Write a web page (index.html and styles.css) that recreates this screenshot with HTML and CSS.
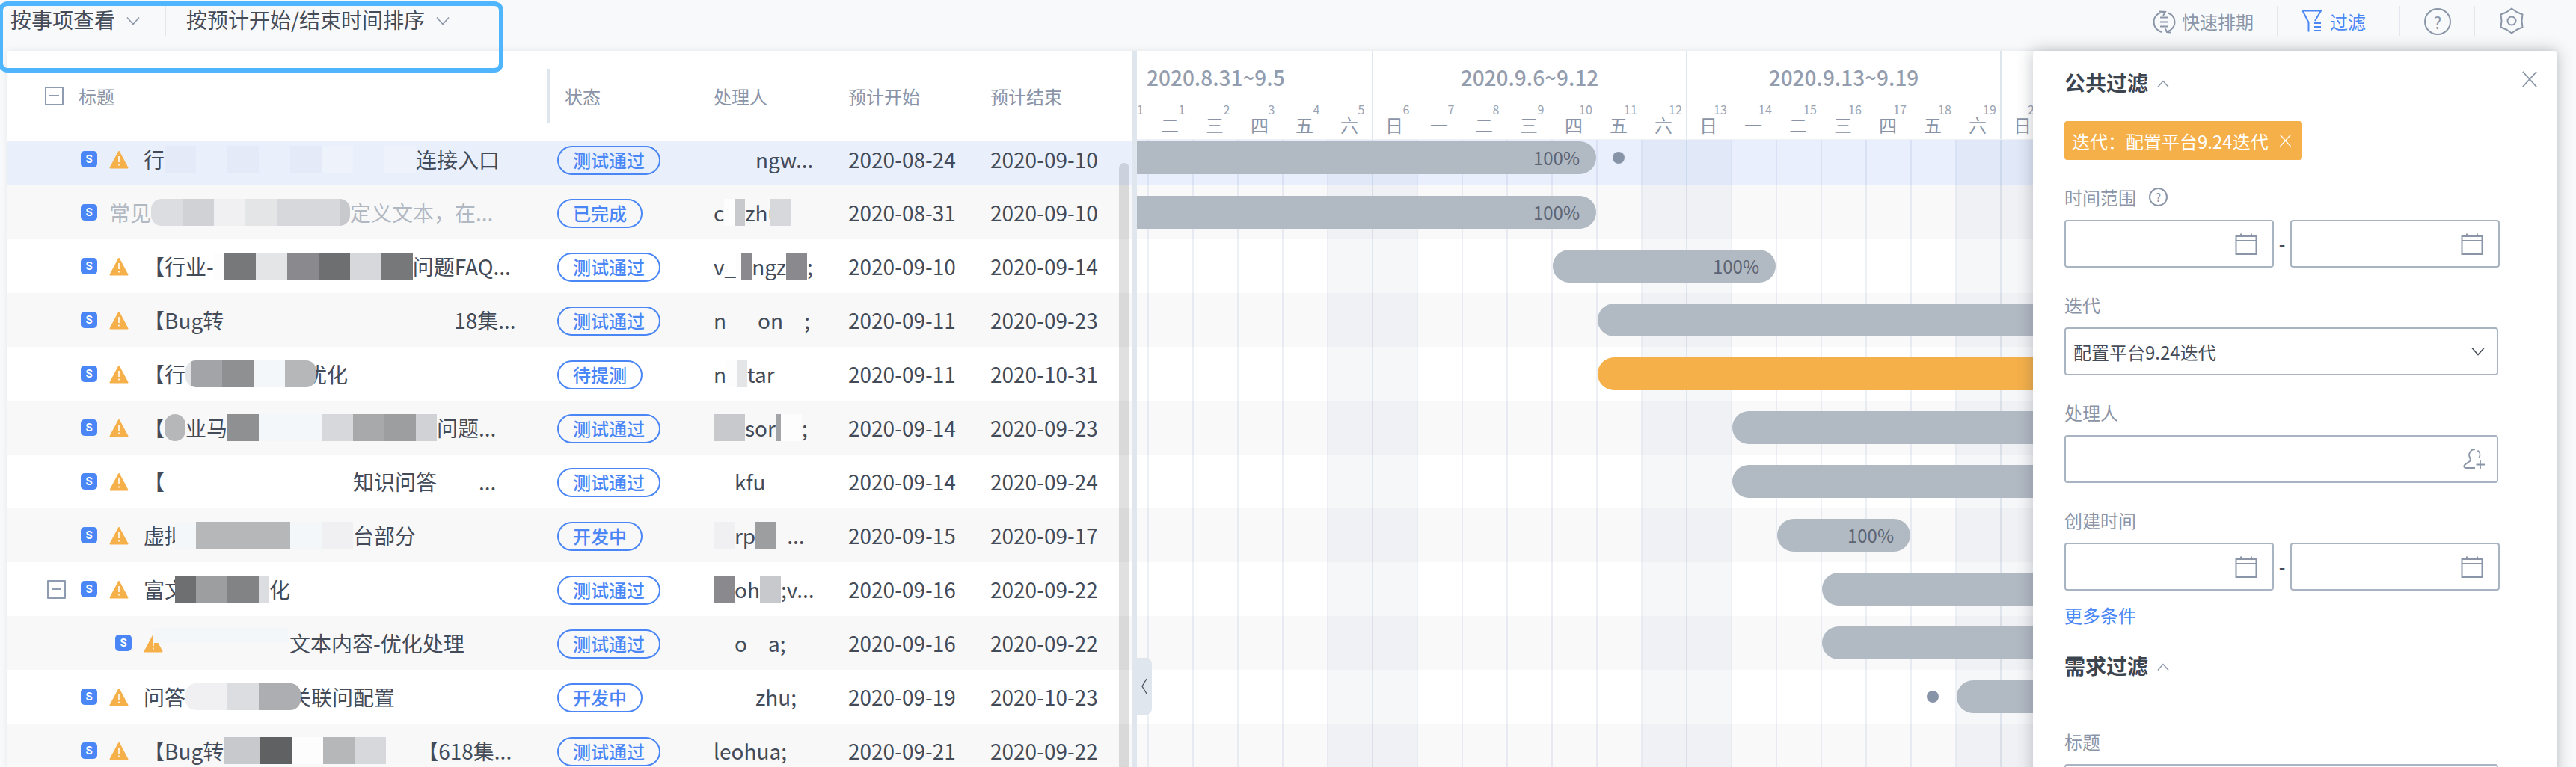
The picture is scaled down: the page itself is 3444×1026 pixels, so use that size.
FILE: index.html
```html
<!DOCTYPE html>
<html lang="zh">
<head>
<meta charset="utf-8">
<title>排期</title>
<link rel="stylesheet" href="styles.css">
</head>
<body>

<svg class="defs" width="0" height="0">
	<symbol id="warn" viewBox="0 0 26 25"><path d="M13 2 24.5 23.5H1.5Z" fill="#f5b04a" stroke="#f5b04a" stroke-width="2" stroke-linejoin="round"/><path d="M13 8v8M13 18.5v2" stroke="#fff" stroke-width="1.6" fill="none"/></symbol>
	<symbol id="down" viewBox="0 0 18 12"><path d="M1 1.5 9 10.5 17 1.5" fill="none" stroke="currentColor" stroke-width="1.5"/></symbol>
	<symbol id="up" viewBox="0 0 18 12"><path d="M1 10.5 9 1.5 17 10.5" fill="none" stroke="currentColor" stroke-width="1.5"/></symbol>
	<symbol id="cross" viewBox="0 0 24 24"><path d="M2 1 22 23M22 1 2 23" fill="none" stroke="currentColor" stroke-width="1.8"/></symbol>
	<symbol id="cal" viewBox="0 0 30 30"><path d="M1.5 5h27v24h-27zM1.5 11h27M8 1.5V5M22 1.5V5" fill="none" stroke="currentColor" stroke-width="2"/></symbol>
	<symbol id="quick" viewBox="0 0 33 31"><path d="M18 2C9 1.500 2.500 8 2.500 15.500c0 6.500 4.500 12 11 13.500M10 1.500l8 .5-3 5M22 3.500c5.500 2.500 8.500 7 8.500 12 0 6.500-4.500 11.500-10.500 13M18 24.500l2 4.500 5 .5M11 9.500h11M11 15.500h11M11 21.500h11" fill="none" stroke="currentColor" stroke-width="2"/></symbol>
	<symbol id="filter" viewBox="0 0 28 30"><path d="M1.500 1.500H26L18 15M1.500 1.500 9.500 17v12.500M17 18h9M17 23h9M17 28h9" fill="none" stroke="currentColor" stroke-width="2"/></symbol>
	<symbol id="gear" viewBox="0 0 34 36"><path d="M17 1.500 23.700 6.300 31.500 9.500 30.500 18 31.500 26.500 23.700 29.700 17 34.500 10.300 29.700 2.500 26.500 3.500 18 2.500 9.500 10.300 6.300Z" fill="none" stroke="currentColor" stroke-width="2" stroke-linejoin="round"/><circle cx="17" cy="18" r="5.500" fill="none" stroke="currentColor" stroke-width="2"/></symbol>
	<symbol id="adduser" viewBox="0 0 30 30"><path d="M17 2a7.500 7.500 0 0 0-7 11c1 2 1 3.500 0 5l-7 5c-1.500 2-.5 4 1.500 4H17M20.500 3.500a7.500 7.500 0 0 1 2 9.500M24 17v11M18.500 22.500H30" fill="none" stroke="currentColor" stroke-width="1.800"/></symbol>
</svg>

<div class="page">

	<header class="toolbar">
		<div class="tb-group">
			<span class="tb-select">按事项查看</span>
			<svg class="tb-chev"><use href="#down"/></svg>
			<span class="tb-sep tb-sep-left"></span>
			<span class="tb-select">按预计开始/结束时间排序</span>
			<svg class="tb-chev"><use href="#down"/></svg>
		</div>
		<div class="tb-group tb-actions">
			<svg class="ic-quick"><use href="#quick"/></svg>
			<span class="tb-link">快速排期</span>
			<span class="tb-sep"></span>
			<svg class="ic-filter"><use href="#filter"/></svg>
			<span class="tb-link active">过滤</span>
			<span class="tb-sep sep-wide"></span>
			<span class="help-big">?</span>
			<span class="tb-sep"></span>
			<svg class="ic-gear"><use href="#gear"/></svg>
		</div>
	</header>

	<div class="main">
		<section class="table">
			<div class="thead">
				<div class="th-title"><span class="box"></span><span>标题</span><span class="th-rule"></span></div>
				<div class="th th-status">状态</div>
				<div class="th">处理人</div>
				<div class="th">预计开始</div>
				<div class="th">预计结束</div>
			</div>

			<div class="row first selected">
				<div class="title"><span class="s">S</span><svg class="warn"><use href="#warn"/></svg>行<span class="smear"><i class="b1"></i><i class="b2"></i><i class="b1"></i><i class="b2"></i><i class="b1"></i><i class="b3"></i><i class="b2"></i><i class="b3"></i></span>连接入口</div>
				<div><span class="pill">测试通过</span></div>
				<div class="who"><span class="smear"><i class="w56 b2"></i></span>ngw...</div>
				<div>2020-08-24</div>
				<div>2020-09-10</div>
			</div>
			<div class="row alt done">
				<div class="title"><span class="s">S</span>常见<span class="smear round"><i class="gdc"></i><i class="gd0"></i><i class="gf0"></i><i class="ge4"></i><i class="gd6"></i><i class="gd6"></i><i class="w14 gc8"></i></span>定义文本，在...</div>
				<div><span class="pill">已完成</span></div>
				<div class="who">c<span class="smear"><i class="w14 wh"></i><i class="w14 gc8"></i></span>zhu<span class="smear back"><i class="w28 gd6"></i></span></div>
				<div>2020-08-31</div>
				<div>2020-09-10</div>
			</div>
			<div class="row">
				<div class="title"><span class="s">S</span><svg class="warn"><use href="#warn"/></svg>【行业-<span class="smear"><i class="w14 wh"></i><i class="g77"></i><i class="ge4"></i><i class="g8a"></i><i class="g6e"></i><i class="gd6"></i><i class="g77"></i></span>问题FAQ...</div>
				<div><span class="pill">测试通过</span></div>
				<div class="who">v_<span class="smear"><i class="w7 wh"></i><i class="w14 g8a"></i></span>ngz<span class="smear"><i class="w28 g8a"></i></span>;</div>
				<div>2020-09-10</div>
				<div>2020-09-14</div>
			</div>
			<div class="row alt">
				<div class="title"><span class="s">S</span><svg class="warn"><use href="#warn"/></svg>【Bug转<span class="smear"><i></i><i></i><i></i><i></i><i></i><i></i><i></i><i class="w14"></i></span>18集...</div>
				<div><span class="pill">测试通过</span></div>
				<div class="who">n<span class="smear"><i></i></span>on<span class="smear"><i class="w28"></i></span>;</div>
				<div>2020-09-11</div>
				<div>2020-09-23</div>
			</div>
			<div class="row">
				<div class="title"><span class="s">S</span><svg class="warn"><use href="#warn"/></svg>【行<span class="smear round over"><i class="w7 ge4"></i><i class="ga3"></i><i class="g8f"></i><i class="gf4"></i><i class="gb5"></i></span>优化</div>
				<div><span class="pill">待提测</span></div>
				<div class="who">n<span class="smear"><i class="w14 wh"></i><i class="w14 ge4"></i></span>tar</div>
				<div>2020-09-11</div>
				<div>2020-10-31</div>
			</div>
			<div class="row alt">
				<div class="title"><span class="s">S</span><svg class="warn"><use href="#warn"/></svg>【<span class="smear round"><i class="w28 gb5"></i></span>业马<span class="smear"><i class="g8f"></i><i class="gf4"></i><i class="gf4"></i><i class="gd6"></i><i class="ga8"></i><i class="g9d"></i><i class="w28 gd0"></i></span>问题...</div>
				<div><span class="pill">测试通过</span></div>
				<div class="who"><span class="smear"><i class="gc8"></i></span>sor<span class="smear"><i class="w7 ga3"></i><i class="w28 wh"></i></span>;</div>
				<div>2020-09-14</div>
				<div>2020-09-23</div>
			</div>
			<div class="row">
				<div class="title"><span class="s">S</span><svg class="warn"><use href="#warn"/></svg>【<span class="smear"><i></i><i></i><i></i><i></i><i></i><i></i></span>知识问答<span class="smear"><i class="w56"></i></span>...</div>
				<div><span class="pill">测试通过</span></div>
				<div class="who"><span class="smear"><i class="w28"></i></span>kfu</div>
				<div>2020-09-14</div>
				<div>2020-09-24</div>
			</div>
			<div class="row alt">
				<div class="title"><span class="s">S</span><svg class="warn"><use href="#warn"/></svg>虚拟<span class="smear back"><i class="w28 gf4"></i><i class="gb5"></i><i class="gb5"></i><i class="gb5"></i><i class="gf4"></i><i class="gf0"></i></span>台部分</div>
				<div><span class="pill">开发中</span></div>
				<div class="who"><span class="smear"><i class="w28 gf0"></i></span>rp<span class="smear"><i class="w28 g9d"></i><i class="w14"></i></span>...</div>
				<div>2020-09-15</div>
				<div>2020-09-17</div>
			</div>
			<div class="row">
				<div class="title has-box"><span class="box"></span><span class="s">S</span><svg class="warn"><use href="#warn"/></svg>富文<span class="smear back"><i class="w28 g6e"></i><i class="g9d"></i><i class="g82"></i><i class="w14 gdc"></i></span>化</div>
				<div><span class="pill">测试通过</span></div>
				<div class="who"><span class="smear"><i class="w28 g8a"></i></span>oh<span class="smear"><i class="w28 gc8"></i></span>;v...</div>
				<div>2020-09-16</div>
				<div>2020-09-22</div>
			</div>
			<div class="row alt">
				<div class="title child"><span class="s">S</span><svg class="warn"><use href="#warn"/></svg><span class="smear high"><i class="gf4"></i><i class="gf4"></i><i class="gf4"></i><i class="gf4"></i><i class="w14 gf4"></i></span>文本内容-优化处理</div>
				<div><span class="pill">测试通过</span></div>
				<div class="who"><span class="smear"><i class="w28"></i></span>o<span class="smear"><i class="w28"></i></span>a;</div>
				<div>2020-09-16</div>
				<div>2020-09-22</div>
			</div>
			<div class="row">
				<div class="title"><span class="s">S</span><svg class="warn"><use href="#warn"/></svg>问答<span class="smear round over"><i class="w56 gf0"></i><i class="gdc"></i><i class="w56 gad"></i></span>关联问配置</div>
				<div><span class="pill">开发中</span></div>
				<div class="who"><span class="smear"><i class="w56"></i></span>zhu;</div>
				<div>2020-09-19</div>
				<div>2020-10-23</div>
			</div>
			<div class="row alt">
				<div class="title"><span class="s">S</span><svg class="warn"><use href="#warn"/></svg>【Bug转<span class="smear"><i class="w7 gc8"></i><i class="gc8"></i><i class="g60"></i><i class="wh"></i><i class="gb5"></i><i class="gd6"></i><i></i></span>【618集...</div>
				<div><span class="pill">测试通过</span></div>
				<div class="who">leohua;</div>
				<div>2020-09-21</div>
				<div>2020-09-22</div>
			</div>
			<div class="scroll-thumb"></div>
		</section>

		<div class="split"></div>

		<section class="gantt">
			<div class="weeks">
				<div class="week week-first">2020.8.31~9.5</div>
				<div class="week">2020.9.6~9.12</div>
				<div class="week">2020.9.13~9.19</div>
				<div class="week"></div>
			</div>
			<div class="days">
				<div class="day day-clip"><b>31</b></div>
				<div class="day"><b>1</b>二</div><div class="day"><b>2</b>三</div><div class="day"><b>3</b>四</div><div class="day"><b>4</b>五</div><div class="day"><b>5</b>六</div>
				<div class="day"><b>6</b>日</div><div class="day"><b>7</b>一</div><div class="day"><b>8</b>二</div><div class="day"><b>9</b>三</div><div class="day"><b>10</b>四</div><div class="day"><b>11</b>五</div><div class="day"><b>12</b>六</div>
				<div class="day"><b>13</b>日</div><div class="day"><b>14</b>一</div><div class="day"><b>15</b>二</div><div class="day"><b>16</b>三</div><div class="day"><b>17</b>四</div><div class="day"><b>18</b>五</div><div class="day"><b>19</b>六</div>
				<div class="day"><b>20</b>日</div>
			</div>
			<div class="chart">
				<div class="g-row first selected"><div class="bar b-aug-10">100%</div><span class="dot d-11"></span></div>
				<div class="g-row alt"><div class="bar b-aug-10">100%</div></div>
				<div class="g-row"><div class="bar b-10-14">100%</div></div>
				<div class="g-row alt"><div class="bar b-11"></div></div>
				<div class="g-row"><div class="bar b-11 orange"></div></div>
				<div class="g-row alt"><div class="bar b-14"></div></div>
				<div class="g-row"><div class="bar b-14"></div></div>
				<div class="g-row alt"><div class="bar b-15-17">100%</div></div>
				<div class="g-row"><div class="bar b-16"></div></div>
				<div class="g-row alt"><div class="bar b-16"></div></div>
				<div class="g-row"><span class="dot d-18"></span><div class="bar b-19"></div></div>
				<div class="g-row alt"></div>
			</div>
			<div class="collapse-tab"><svg viewBox="0 0 10 22" class="ic-left"><path d="M8 1 2 11 8 21" fill="none" stroke="#4a5260" stroke-width="1.300"/></svg></div>
		</section>
	</div>

	<aside class="panel">
		<div class="panel-head">
			<span class="panel-title">公共过滤</span>
			<svg class="ic-up"><use href="#up"/></svg>
			<svg class="ic-close"><use href="#cross"/></svg>
		</div>
		<div class="tag">迭代：配置平台9.24迭代<svg class="ic-tagx"><use href="#cross"/></svg></div>

		<div class="label first-label">时间范围<span class="help-small">?</span></div>
		<div class="date-range">
			<div class="input"><svg class="ic-cal"><use href="#cal"/></svg></div>
			<span class="dash">-</span>
			<div class="input"><svg class="ic-cal"><use href="#cal"/></svg></div>
		</div>

		<div class="label">迭代</div>
		<div class="input wide">配置平台9.24迭代<svg class="ic-select"><use href="#down"/></svg></div>

		<div class="label">处理人</div>
		<div class="input wide"><svg class="ic-user"><use href="#adduser"/></svg></div>

		<div class="label">创建时间</div>
		<div class="date-range">
			<div class="input"><svg class="ic-cal"><use href="#cal"/></svg></div>
			<span class="dash">-</span>
			<div class="input"><svg class="ic-cal"><use href="#cal"/></svg></div>
		</div>

		<div class="more">更多条件</div>

		<div class="panel-head second">
			<span class="panel-title">需求过滤</span>
			<svg class="ic-up"><use href="#up"/></svg>
		</div>

		<div class="label title-label">标题</div>
		<div class="input wide"></div>
	</aside>

	<div class="highlight"></div>
</div>

</body>
</html>
```

FILE: styles.css
```css
* {
	box-sizing: border-box;
}
body {
	margin: 0;
	background: #f8f9fa;
	font-family: "Noto Sans CJK SC", "Liberation Sans", sans-serif;
	color: #444b58;
}
.defs {
	position: absolute;
}
.page {
	position: relative;
	width: 3444px;
	height: 1026px;
	overflow: hidden;
}

/* toolbar */
.toolbar {
	display: flex;
	justify-content: space-between;
	height: 68px;
	padding: 8px 69px 0 14px;
}
.tb-group {
	display: flex;
	align-items: flex-start;
}
.tb-select {
	font-size: 28px;
	line-height: 36px;
}
.tb-chev {
	width: 18px;
	height: 12px;
	margin: 14px 0 0 15px;
	color: #8a96a8;
}
.tb-sep {
	width: 2px;
	height: 40px;
	margin: 0 31px;
	background: #e3e7ed;
}
.tb-sep-left {
	margin: 0 27px 0 33px;
}
.sep-wide {
	margin: 0 32px 0 44px;
}
.tb-actions {
	color: #8a96a8;
}
.tb-link {
	font-size: 24px;
	line-height: 42px;
}
.tb-link.active {
	color: #4a86f5;
}
.ic-quick {
	width: 33px;
	height: 31px;
	margin: 6px 7px 0 0;
}
.ic-filter {
	width: 28px;
	height: 30px;
	margin: 5px 10px 0 0;
	color: #4a86f5;
}
.help-big {
	width: 36px;
	height: 36px;
	margin: 3px 0 0 0;
	border: 2px solid #8a96a8;
	border-radius: 50%;
	font-size: 22px;
	line-height: 32px;
	text-align: center;
}
.help-big + .tb-sep {
	margin: 0 32px 0 30px;
}
.ic-gear {
	width: 34px;
	height: 36px;
	margin-top: 2px;
}

/* layout */
.main {
	display: flex;
	height: 958px;
	margin: 0 26px 0 10px;
	background: #fff;
	box-shadow: 0 0 8px rgba(60, 70, 90, .12);
}
.table {
	position: relative;
	flex: none;
	width: 1504px;
	font-size: 28px;
}
.split {
	flex: none;
	width: 6px;
	background: #dfe6ee;
}
.gantt {
	position: relative;
	flex: 1;
	overflow: hidden;
	min-width: 0;
}

/* table */
.thead,
.row {
	display: grid;
	grid-template-columns: 735px 209px 180px 190px 1fr;
	align-items: center;
}
.thead {
	height: 120px;
	font-size: 24px;
	color: #8a94a6;
}
.th-status {
	padding-left: 10px;
}
.th-title {
	display: flex;
	align-items: center;
	padding: 0 10px 0 50px;
}
.th-rule {
	width: 4px;
	height: 72px;
	margin-left: auto;
	background: #dfe5ec;
}
.box {
	position: relative;
	flex: none;
	width: 25px;
	height: 25px;
	margin-right: 20px;
	border: 2px solid #8f9bb0;
	border-radius: 1px;
}
.box::after {
	content: "";
	position: absolute;
	left: 4px;
	right: 4px;
	top: 9.500px;
	height: 2px;
	background: #8f9bb0;
}
.row {
	height: 72px;
	line-height: 40px;
	white-space: nowrap;
}
.row.first {
	height: 60px;
	padding-bottom: 10px;
}
.alt {
	background: rgba(60, 60, 80, .035);
}
.selected {
	background: #e9f0fc;
}
.g-row.selected {
	background: rgba(70, 125, 240, .12);
}
.g-row.alt {
	background: rgba(60, 60, 80, .03);
}
.title {
	display: flex;
	align-items: center;
	padding-left: 98px;
	overflow: hidden;
}
.title.has-box {
	padding-left: 53px;
}
.title.child {
	padding-left: 144px;
}
.done .title {
	color: #b2b8c2;
}
.s {
	flex: none;
	width: 22px;
	height: 22px;
	margin-right: 16px;
	border-radius: 5px;
	background: #4a86f5;
	color: #fff;
	font: bold 15px/22px "Roboto", sans-serif;
	text-align: center;
}
.warn {
	flex: none;
	width: 26px;
	height: 25px;
	margin-right: 20px;
}
.child .warn {
	margin-right: 0;
}
.pill {
	display: inline-block;
	height: 39px;
	padding: 0 19px;
	border: 2px solid #4a86f5;
	border-radius: 20px;
	color: #4a86f5;
	font-size: 24px;
	font-weight: 500;
	line-height: 34px;
}
.who {
	display: flex;
	align-items: center;
}

/* mosaic patches over hidden names */
.smear {
	position: relative;
	z-index: 1;
	display: inline-flex;
	flex: none;
	height: 36px;
	vertical-align: middle;
}
.smear i {
	display: block;
	flex: none;
	width: 42px;
}
.smear.round {
	overflow: hidden;
	border-radius: 14px;
}
.smear.over {
	margin-right: -14px;
}
.smear.back {
	margin-left: -14px;
}
.smear.high {
	margin-left: -13px;
	transform: translateY(-18px);
}
.smear .w7 { width: 7px; }
.smear .w14 { width: 14px; }
.smear .w28 { width: 28px; }
.smear .w56 { width: 56px; }
.wh { background: #fdfdfe; }
.b1 { background: #e5eaf8; }
.b2 { background: #e9effb; }
.b3 { background: #eef2fb; }
.g60 { background: #606163; }
.g6e { background: #6e6f71; }
.g77 { background: #77787a; }
.g82 { background: #828385; }
.g8a { background: #8a8a8e; }
.g8f { background: #8f9092; }
.g9d { background: #9d9ea0; }
.ga3 { background: #a3a4a7; }
.ga8 { background: #a8a9ab; }
.gad { background: #adaeb2; }
.gb5 { background: #b5b7b9; }
.gc8 { background: #c8c9cc; }
.gd0 { background: #d0d2d6; }
.gd6 { background: #d6d8dc; }
.gdc { background: #dcdde0; }
.ge4 { background: #e4e5e7; }
.gf0 { background: #f0f0f2; }
.gf4 { background: #f4f7f9; }
.scroll-thumb {
	position: absolute;
	left: 1486px;
	top: 150px;
	bottom: 0;
	width: 14px;
	border-radius: 7px 7px 0 0;
	background: rgba(0, 0, 0, .12);
}

/* gantt header */
.weeks {
	display: flex;
	height: 70px;
}
.week {
	flex: none;
	width: 420px;
	padding-top: 16px;
	border-left: 2px solid #dfe5ec;
	color: #939dae;
	font-size: 28px;
	font-weight: 500;
	line-height: 38px;
	text-align: center;
}
.week-first {
	width: 314px;
	padding-left: 13px;
	border-left: 0;
	text-align: left;
}
.days {
	position: relative;
	display: grid;
	grid-template-columns: 14px repeat(32, 60px);
	height: 49px;
	background: linear-gradient(90deg, #dfe5ec 0 2px, transparent 2px) 314px 0 / 420px 100% repeat-x;
	border-bottom: 1px solid #eef1f5;
}
.day {
	display: flex;
	flex-direction: column;
	align-items: center;
	color: #8a94a6;
	font-size: 24px;
	line-height: 24px;
}
.day b {
	padding-left: 32px;
	color: #9aa4b4;
	font-size: 16px;
	font-weight: 400;
	line-height: 17px;
}
.day-clip {
	width: 60px;
	margin-left: -46px;
}

/* gantt chart */
.chart {
	height: 839px;
	background-color: #fff;
	background-image:
		linear-gradient(90deg, #dfe5ec 0 2px, transparent 2px),
		linear-gradient(90deg, #edf1f6 0 2px, transparent 2px),
		linear-gradient(90deg, #f6f7f9 0 120px, transparent 120px);
	background-size: 420px 100%, 60px 100%, 420px 100%;
	background-position: 314px 0, 14px 0, 254px 0;
	background-repeat: repeat-x;
}
.g-row {
	display: grid;
	grid-template-columns: 14px repeat(32, 60px);
	grid-template-rows: 44px;
	align-items: center;
	align-content: center;
	height: 72px;
}
.g-row.first {
	height: 61px;
	padding-bottom: 15px;
	align-content: end;
}
.bar {
	grid-row: 1;
	height: 44px;
	margin-left: 2px;
	padding-right: 22px;
	border-radius: 22px;
	background: #b1b9c3;
	color: #5c6473;
	font-size: 24px;
	line-height: 44px;
	text-align: right;
	white-space: nowrap;
}
.orange {
	background: #f5b04a;
}
.b-aug-10 {
	grid-column: 1 / 12;
	margin-left: -30px;
}
.b-10-14 { grid-column: 11 / 16; }
.b-11 { grid-column: 12 / -1; }
.b-14 { grid-column: 15 / -1; }
.b-15-17 { grid-column: 16 / 19; }
.b-16 { grid-column: 17 / -1; }
.b-19 { grid-column: 20 / -1; }
.dot {
	grid-row: 1;
	justify-self: center;
	width: 16px;
	height: 16px;
	border-radius: 50%;
	background: #8794a8;
}
.d-11 { grid-column: 12; }
.d-18 { grid-column: 19; }
.collapse-tab {
	position: absolute;
	left: 0;
	top: 812px;
	display: flex;
	align-items: center;
	justify-content: center;
	width: 20px;
	height: 76px;
	border-radius: 0 8px 8px 0;
	background: #dfe6ee;
}
.ic-left {
	width: 10px;
	height: 22px;
}

/* filter panel */
.panel {
	position: absolute;
	left: 2718px;
	top: 68px;
	bottom: -30px;
	width: 700px;
	padding: 22px 25px 0 42px;
	border-radius: 4px;
	background: #fff;
	box-shadow: 0 0 22px rgba(40, 45, 60, .28);
}
.panel-head {
	display: flex;
	align-items: center;
	height: 40px;
}
.panel-head.second {
	margin-top: 31px;
}
.panel-title {
	color: #3c4450;
	font-size: 28px;
	font-weight: 700;
	line-height: 40px;
}
.ic-up {
	width: 16px;
	height: 11px;
	margin: 4px 0 0 12px;
	color: #8a96a8;
}
.ic-close {
	width: 22px;
	height: 24px;
	margin: -8px 0 0 auto;
	color: #8a96a8;
}
.tag {
	display: flex;
	align-items: center;
	width: 318px;
	height: 52px;
	margin-top: 32px;
	padding-left: 10px;
	border-radius: 4px;
	background: #f5b04a;
	color: #fff;
	font-size: 24px;
	white-space: nowrap;
}
.ic-tagx {
	flex: none;
	width: 17px;
	height: 18px;
	margin-left: auto;
	margin-right: 14px;
}
.label {
	display: flex;
	align-items: center;
	height: 32px;
	margin: 33px 0 15px;
	color: #8a94a6;
	font-size: 24px;
}
.title-label {
	margin-top: 65px;
}
.help-small {
	width: 25px;
	height: 25px;
	margin-left: 17px;
	border: 2px solid #8a96a8;
	border-radius: 50%;
	font-size: 15px;
	line-height: 21px;
	text-align: center;
}
.date-range {
	display: flex;
	align-items: center;
}
.dash {
	width: 22px;
	color: #444b58;
	font-size: 24px;
	font-weight: 500;
	line-height: 30px;
	text-align: center;
}
.input {
	display: flex;
	align-items: center;
	justify-content: flex-end;
	width: 280px;
	height: 64px;
	border: 2px solid #a9b4c2;
	border-radius: 4px;
	color: #8a96a8;
}
.input.wide {
	justify-content: space-between;
	width: 580px;
	padding: 0 16px 0 10px;
	color: #444b58;
	font-size: 24px;
}
.ic-cal {
	width: 30px;
	height: 30px;
	margin-right: 20px;
}
.ic-select {
	width: 18px;
	height: 12px;
	color: #444b58;
}
.ic-user {
	width: 30px;
	height: 30px;
	margin-left: auto;
	color: #8a96a8;
}
.more {
	margin-top: 17px;
	color: #4a86f5;
	font-size: 24px;
	line-height: 32px;
}

/* selection frame drawn over the top-left corner */
.highlight {
	position: absolute;
	left: -2px;
	top: 2px;
	width: 675px;
	height: 95px;
	border: 6px solid #4fb5fd;
	border-radius: 12px;
}
```
